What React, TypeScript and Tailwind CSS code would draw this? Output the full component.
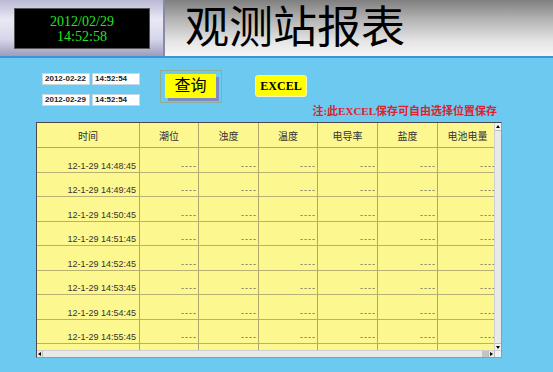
import React from "react"

const columns = [
    {label: "时间", w: "w-[103px]"},
    {label: "潮位", w: "w-[59px]"},
    {label: "浊度", w: "w-[60px]"},
    {label: "温度", w: "w-[59px]"},
    {label: "电导率", w: "w-[60px]"},
    {label: "盐度", w: "w-[60px]"},
    {label: "电池电量", w: "w-[60px]"},
]

const times = [
    "12-1-29 14:48:45",
    "12-1-29 14:49:45",
    "12-1-29 14:50:45",
    "12-1-29 14:51:45",
    "12-1-29 14:52:45",
    "12-1-29 14:53:45",
    "12-1-29 14:54:45",
    "12-1-29 14:55:45",
    "",
]

const cjk = "font-['Liberation_Serif','Noto_Sans_CJK_SC',serif]"

function Clock() {
    return (
        <div className="w-[165px] h-[56px] shrink-0 pt-[8px] pl-[14px] bg-[linear-gradient(180deg,#b9b9d4_0%,#e9e9f5_35%,#d6d6ea_70%,#9c9cbc_100%)] border-r-2 border-[#8a8aa8]">
            <div className="w-[136px] h-[41px] bg-black border border-[#555] flex flex-col items-center justify-center font-['Liberation_Serif',serif] text-[#27e027] text-[14px] leading-[15px]">
                <div>2012/02/29</div>
                <div>14:52:58</div>
            </div>
        </div>
    )
}

function DateBox({text, w}: {text: string; w: string}) {
    return (
        <div className={`${w} h-[12px] bg-white border border-[#c8d8e0] flex items-center pl-[2px] font-['Liberation_Sans',sans-serif] font-bold text-[8px] text-[#222]`}>
            {text}
        </div>
    )
}

function Dash() {
    return <span className="tracking-[1px] text-[9px] leading-[9px] text-[#666] font-['Liberation_Sans',sans-serif]">----</span>
}

export default function App() {
    return (
        <div className="w-[553px] h-[372px] overflow-hidden bg-[#6cc9ef] flex flex-col">
            {/* header */}
            <div className="h-[56px] flex bg-[linear-gradient(180deg,#7f7f7f_0%,#b4b4b4_35%,#e6e6e6_75%,#f6f6f6_100%)]">
                <Clock/>
                <div className={`ml-[20px] pt-[2px] flex items-center text-[44px] leading-none text-black ${cjk}`}>
                    观测站报表
                </div>
            </div>
            <div className="h-[2px] bg-[#3f92d6]"/>

            {/* controls */}
            <div className="flex items-start pl-[42px] mt-[12px]">
                <div className="flex flex-col gap-[9px] mt-[3px]">
                    <div className="flex gap-[2px]">
                        <DateBox text="2012-02-22" w="w-[48px]"/>
                        <DateBox text="14:52:54" w="w-[48px]"/>
                    </div>
                    <div className="flex gap-[2px]">
                        <DateBox text="2012-02-29" w="w-[48px]"/>
                        <DateBox text="14:52:54" w="w-[48px]"/>
                    </div>
                </div>
                <div className="ml-[20px] w-[62px] h-[33px] border border-[#8fae98] pt-[3px] pl-[4px]">
                    <div className="w-[51px] h-[24px] bg-[#ffff00] shadow-[3px_3px_0_#7d88c4] flex items-center justify-center">
                        <span className={`text-[16px] text-black ${cjk}`}>查询</span>
                    </div>
                </div>
                <div className="ml-[33px] mt-[5px] w-[52px] h-[22px] rounded-[3px] bg-[#ffff00] border border-[#f4f4c0] flex items-center justify-center">
                    <span className="font-['Liberation_Serif',serif] font-bold text-[12px] text-black">EXCEL</span>
                </div>
            </div>

            {/* note */}
            <div className="flex justify-end pr-[56px] -mt-[1px]">
                <span className={`text-[11px] leading-[13px] font-bold text-[#e0202a] ${cjk}`}>注:此EXCEL保存可自由选择位置保存</span>
            </div>

            {/* table */}
            <div className="ml-[36px] mt-[4px] w-[466px] h-[236px] border border-[#4a4a4a] border-r-[#9a9a9a] border-b-[#9a9a9a] flex flex-col bg-[#ececec]">
                <div className="flex flex-1 min-h-0">
                    <div className="flex-1 overflow-hidden bg-[#fdf78f]">
                        <div className="flex h-[25px] border-b border-[#b0a86a] w-max">
                            {columns.map((c) => (
                                <div key={c.label} className={`${c.w} shrink-0 h-full border-r border-[#b0a86a] flex items-center justify-center text-[10px] text-[#333] font-['Noto_Sans_CJK_SC',sans-serif]`}>
                                    {c.label}
                                </div>
                            ))}
                        </div>
                        {times.map((t, i) => (
                            <div key={i} className="flex h-[24.5px] border-b border-[#b8b070] w-max">
                                {columns.map((c, j) => (
                                    <div key={c.label} className={`${c.w} shrink-0 h-full border-r border-[#b0a86a] flex items-end justify-end pb-[1px] ${j === 0 ? "pr-[3px]" : "pr-[1px]"}`}>
                                        {t && (j === 0
                                            ? <span className="text-[9px] leading-[9px] text-[#333] font-['Liberation_Sans',sans-serif]">{t}</span>
                                            : <Dash/>)}
                                    </div>
                                ))}
                            </div>
                        ))}
                    </div>
                    {/* vertical scrollbar */}
                    <div className="w-[7px] shrink-0 bg-[#e9e9e9] border-l border-[#cfcfcf] flex flex-col">
                        <div className="h-[8px] bg-[#f4f4f4] border-b border-[#bbb] flex items-center justify-center">
                            <div className="w-0 h-0 border-l-[2px] border-r-[2px] border-b-[3px] border-l-transparent border-r-transparent border-b-black"/>
                        </div>
                        <div className="flex-1"/>
                        <div className="h-[7px] bg-[#f4f4f4] border-t border-[#bbb] flex items-center justify-center">
                            <div className="w-0 h-0 border-l-[2px] border-r-[2px] border-t-[3px] border-l-transparent border-r-transparent border-t-black"/>
                        </div>
                    </div>
                </div>
                {/* horizontal scrollbar */}
                <div className="h-[7px] flex bg-[#e9e9e9] border-t border-[#cfcfcf]">
                    <div className="w-[6px] flex items-center justify-center border-r border-[#bbb]">
                        <div className="w-0 h-0 border-t-[2px] border-b-[2px] border-r-[3px] border-t-transparent border-b-transparent border-r-black"/>
                    </div>
                    <div className="flex-1"/>
                    <div className="w-[6px] bg-[#c4c4c4]"/>
                    <div className="w-[6px] flex items-center justify-center border-l border-[#bbb]">
                        <div className="w-0 h-0 border-t-[2px] border-b-[2px] border-l-[3px] border-t-transparent border-b-transparent border-l-black"/>
                    </div>
                    <div className="w-[7px] bg-[#f2f2f2] border-l border-[#bbb]"/>
                </div>
            </div>
        </div>
    )
}
